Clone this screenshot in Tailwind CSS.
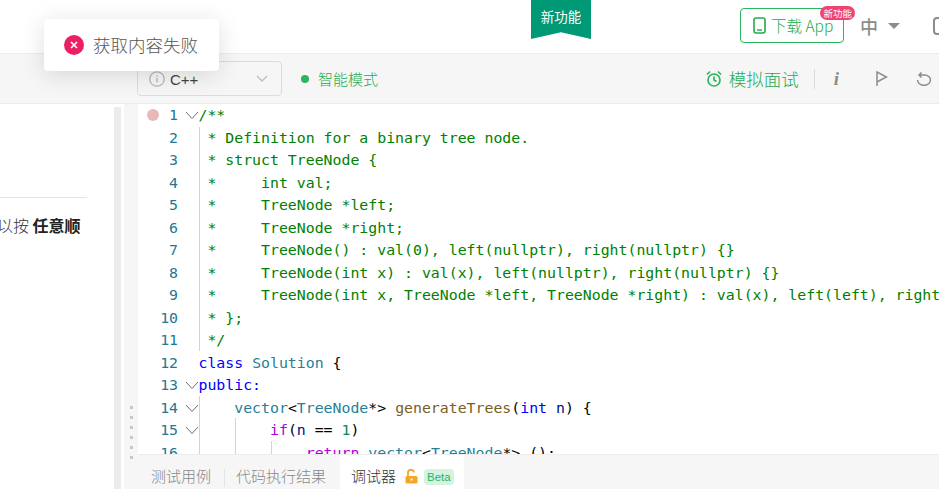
<!DOCTYPE html>
<html lang="zh">
<head>
    <meta charset="utf-8" />
    <title>LeetCode</title>
    <script src="https://cdn.jsdelivr.net/npm/@tailwindcss/browser@4"></script>
</head>
<body class="relative h-[489px] w-[939px] overflow-hidden bg-white font-['Noto_Sans_CJK_SC','Noto_Sans',sans-serif]">
    <!-- toast -->
    <div class="absolute left-[44px] top-[19px] z-20 flex h-[52px] w-[175px] items-center gap-[9px] rounded bg-white pl-[20px] shadow-[0_4px_24px_rgba(0,0,0,0.13)]">
        <svg class="h-[20px] w-[20px]" viewBox="0 0 20 20"><circle cx="10" cy="10" r="10" fill="#ec1f64"/><path d="M7 7l6 6M13 7l-6 6" stroke="#fff" stroke-width="1.6"/></svg>
        <span class="text-[17.5px] leading-none font-light text-[#555]">获取内容失败</span>
    </div>

    <!-- header -->
    <header class="relative flex h-[54px] items-center overflow-hidden border-b border-[#ececec] bg-white pl-[740px]">
        <div class="absolute left-[531px] top-0 flex h-[39px] w-[60px] justify-center bg-[#009975] pt-[6px] text-[13.500px] leading-[20px] text-white [clip-path:polygon(0_0,100%_0,100%_100%,50%_83%,0_100%)]">新功能</div>
        <div class="relative mb-[2px] flex h-[35px] w-[104px] shrink-0 items-center rounded border border-[#2cb55d] pl-[12px] text-[#22ac50]">
            <svg class="mr-[5px] h-[17px] w-[13px]" viewBox="0 0 13 17" fill="none"><rect x="1" y="1" width="11" height="15" rx="2" stroke="currentColor" stroke-width="1.6"/><path d="M4 13h5" stroke="currentColor" stroke-width="1.4"/></svg>
            <span class="whitespace-nowrap text-[15.500px] leading-none font-light">下载 App</span>
            <span class="absolute right-[-12px] top-[-3px] whitespace-nowrap rounded-full bg-[#ef4473] px-[3px] text-[9.500px] leading-[14px] text-white">新功能</span>
        </div>
        <span class="ml-[16px] mb-[1px] shrink-0 text-[18px] leading-none font-medium text-[#8c8c8c]">中</span>
        <span class="ml-[10px] mb-[1px] h-0 w-0 shrink-0 border-x-[6px] border-t-[6px] border-x-transparent border-t-[#8c8c8c]"></span>
        <span class="ml-[33px] mb-[2px] h-[18px] w-[20px] shrink-0 rounded-[4px] border-2 border-[#8c8c8c]"></span>
    </header>

    <!-- toolbar -->
    <div class="flex h-[50px] items-center border-b border-[#ececec] bg-[#f6f6f6] pl-[137px]">
        <div class="flex h-[35px] w-[145px] shrink-0 items-center rounded border border-[#dcdcdc] pl-[11px] text-[#444]">
            <svg class="mr-[5px] h-[16px] w-[16px]" viewBox="0 0 16 16" fill="none"><circle cx="8" cy="8" r="7.2" stroke="#b5b5b5" stroke-width="1.3"/><path d="M8 7v4.5M8 4.5v1.2" stroke="#b5b5b5" stroke-width="1.3"/></svg>
            <span class="mt-[2px] font-['Liberation_Sans',sans-serif] text-[15px] leading-none">C++</span>
            <svg class="ml-[58px] h-[7px] w-[12px]" viewBox="0 0 12 7" fill="none"><path d="M1 1l5 5 5-5" stroke="#bdbdbd" stroke-width="1.3"/></svg>
        </div>
        <span class="ml-[19px] h-[8px] w-[8px] rounded-full bg-[#2db55d]"></span>
        <span class="ml-[9px] text-[15px] leading-none font-light text-[#22ac50]">智能模式</span>
        <div class="ml-auto flex items-center pr-[7px]">
            <svg class="mr-[7px] h-[17px] w-[16px]" viewBox="0 0 16 17" fill="none" stroke="#2db55d" stroke-width="1.7"><circle cx="8" cy="10" r="6"/><path d="M8 6.500V10l2.500 1.500M1 4.500L4 1.500M15 4.500L12 1.500"/></svg>
            <span class="text-[17.500px] leading-none font-light text-[#22ac50]">模拟面试</span>
            <span class="ml-[15px] h-[20px] w-px bg-[#dcdcdc]"></span>
            <span class="ml-[19px] font-['Liberation_Serif',serif] text-[19px] leading-none font-bold italic text-[#8c8c8c]">i</span>
            <svg class="ml-[37px] h-[15px] w-[12px]" viewBox="0 0 12 15" fill="none" stroke="#8c8c8c" stroke-width="1.5"><path d="M1 15V1l9.500 5L1 11"/></svg>
            <svg class="ml-[28px] h-[14px] w-[16px] shrink-0" viewBox="0 0 16 14" fill="none" stroke="#8c8c8c" stroke-width="1.500"><path d="M1.500 8a6.500 5.300 0 0 0 13 0a6 5 0 0 0-6-5H4M5.500.500L3 3l2.500 2.500"/></svg>
        </div>
    </div>

    <!-- body -->
    <div class="flex h-[385px]">
        <!-- description pane -->
        <div class="w-[114px] shrink-0 overflow-hidden bg-white pt-[93px]">
            <div class="w-[87px] border-t border-[#e4e4e4]"></div>
            <p class="mt-[17px] -ml-[3px] whitespace-nowrap text-[16px] leading-[20px] font-light text-[#333]">以按 <b class="font-bold text-[#222]">任意顺</b></p>
        </div>
        <div class="mt-[3px] w-[7px] shrink-0 bg-[#ebebeb]"></div>
        <!-- drag handle -->
        <div class="w-[3px] shrink-0 bg-white"></div>
        <div class="flex w-[14px] shrink-0 flex-col justify-end gap-[7px] bg-[#f6f6f6] pb-[30px] pl-[6px]">
            <span class="h-[3px] w-[3px] bg-[#c8c8c8]"></span>
            <span class="h-[3px] w-[3px] bg-[#c8c8c8]"></span>
            <span class="h-[3px] w-[3px] bg-[#c8c8c8]"></span>
            <span class="h-[3px] w-[3px] bg-[#c8c8c8]"></span>
            <span class="h-[3px] w-[3px] bg-[#c8c8c8]"></span>
            <span class="h-[3px] w-[3px] bg-[#c8c8c8]"></span>
        </div>
        <!-- editor pane -->
        <div class="flex min-w-0 flex-1 flex-col">
            <div class="relative min-h-0 flex-1 overflow-hidden bg-white font-['DejaVu_Sans_Mono',monospace] text-[14.850px] leading-[22.5px] text-black">
                <span class="absolute left-[61px] top-[23px] h-[224px] w-px bg-[#d3d3d3]"></span>
                <span class="absolute left-[61px] top-[292px] h-[58px] w-px bg-[#d3d3d3]"></span>
                <span class="absolute left-[97px] top-[314px] h-[36px] w-px bg-[#d3d3d3]"></span>
                <span class="absolute left-[133px] top-[337px] h-[13px] w-px bg-[#d3d3d3]"></span>
                <span class="absolute left-[9px] top-[5px] h-[12px] w-[12px] rounded-full bg-[#e8b9b9]"></span>

                <div class="flex whitespace-pre"><span class="w-[40px] shrink-0 text-right text-[#237893]">1</span><svg class="ml-[6.500px] mt-[7px] h-[9px] w-[14px] shrink-0" viewBox="0 0 14 9" fill="none"><path d="M1 1l6 6.500L13 1" stroke="#6e6e6e"/></svg><span class="text-[#008000]">/**</span></div>
                <div class="flex whitespace-pre"><span class="w-[40px] shrink-0 text-right text-[#237893]">2</span><span class="ml-[20.500px] text-[#008000]"> * Definition for a binary tree node.</span></div>
                <div class="flex whitespace-pre"><span class="w-[40px] shrink-0 text-right text-[#237893]">3</span><span class="ml-[20.500px] text-[#008000]"> * struct TreeNode {</span></div>
                <div class="flex whitespace-pre"><span class="w-[40px] shrink-0 text-right text-[#237893]">4</span><span class="ml-[20.500px] text-[#008000]"> *     int val;</span></div>
                <div class="flex whitespace-pre"><span class="w-[40px] shrink-0 text-right text-[#237893]">5</span><span class="ml-[20.500px] text-[#008000]"> *     TreeNode *left;</span></div>
                <div class="flex whitespace-pre"><span class="w-[40px] shrink-0 text-right text-[#237893]">6</span><span class="ml-[20.500px] text-[#008000]"> *     TreeNode *right;</span></div>
                <div class="flex whitespace-pre"><span class="w-[40px] shrink-0 text-right text-[#237893]">7</span><span class="ml-[20.500px] text-[#008000]"> *     TreeNode() : val(0), left(nullptr), right(nullptr) {}</span></div>
                <div class="flex whitespace-pre"><span class="w-[40px] shrink-0 text-right text-[#237893]">8</span><span class="ml-[20.500px] text-[#008000]"> *     TreeNode(int x) : val(x), left(nullptr), right(nullptr) {}</span></div>
                <div class="flex whitespace-pre"><span class="w-[40px] shrink-0 text-right text-[#237893]">9</span><span class="ml-[20.500px] text-[#008000]"> *     TreeNode(int x, TreeNode *left, TreeNode *right) : val(x), left(left), right(right) {}</span></div>
                <div class="flex whitespace-pre"><span class="w-[40px] shrink-0 text-right text-[#237893]">10</span><span class="ml-[20.500px] text-[#008000]"> * };</span></div>
                <div class="flex whitespace-pre"><span class="w-[40px] shrink-0 text-right text-[#237893]">11</span><span class="ml-[20.500px] text-[#008000]"> */</span></div>
                <div class="flex whitespace-pre"><span class="w-[40px] shrink-0 text-right text-[#237893]">12</span><span class="ml-[20.500px]"><span class="text-[#0000ff]">class</span> <span class="text-[#267f99]">Solution</span> {</span></div>
                <div class="flex whitespace-pre"><span class="w-[40px] shrink-0 text-right text-[#237893]">13</span><svg class="ml-[6.500px] mt-[7px] h-[9px] w-[14px] shrink-0" viewBox="0 0 14 9" fill="none"><path d="M1 1l6 6.500L13 1" stroke="#6e6e6e"/></svg><span class="text-[#0000ff]">public:</span></div>
                <div class="flex whitespace-pre"><span class="w-[40px] shrink-0 text-right text-[#237893]">14</span><svg class="ml-[6.500px] mt-[7px] h-[9px] w-[14px] shrink-0" viewBox="0 0 14 9" fill="none"><path d="M1 1l6 6.500L13 1" stroke="#6e6e6e"/></svg><span>    <span class="text-[#267f99]">vector</span>&lt;<span class="text-[#267f99]">TreeNode</span>*&gt; <span class="text-[#795e26]">generateTrees</span>(<span class="text-[#0000ff]">int</span> <span class="text-[#001080]">n</span>) {</span></div>
                <div class="flex whitespace-pre"><span class="w-[40px] shrink-0 text-right text-[#237893]">15</span><svg class="ml-[6.500px] mt-[7px] h-[9px] w-[14px] shrink-0" viewBox="0 0 14 9" fill="none"><path d="M1 1l6 6.500L13 1" stroke="#6e6e6e"/></svg><span>        <span class="text-[#af00db]">if</span>(<span class="text-[#001080]">n</span> == <span class="text-[#098658]">1</span>)</span></div>
                <div class="flex whitespace-pre"><span class="w-[40px] shrink-0 text-right text-[#237893]">16</span><span class="ml-[20.500px]">            <span class="text-[#af00db]">return</span> <span class="text-[#267f99]">vector</span>&lt;<span class="text-[#267f99]">TreeNode</span>*&gt; ();</span></div>
            </div>
            <!-- console tabs -->
            <div class="flex h-[35px] shrink-0 border-t border-[#ececec] bg-[#f6f6f6] text-[15px] font-light text-[#888]">
                <span class="flex items-center whitespace-nowrap pl-[13px] pr-[13px] pt-[9px]">测试用例</span>
                <span class="mt-[14px] h-[18px] w-px bg-[#e4e4e4]"></span>
                <span class="flex items-center whitespace-nowrap pl-[11px] pr-[14px] pt-[9px]">代码执行结果</span>
                <div class="flex items-center bg-white pl-[11px] pr-[10px] pt-[9px] text-[#333]">
                    <span class="whitespace-nowrap">调试器</span>
                    <svg class="ml-[9px] h-[15px] w-[13px]" viewBox="0 0 13 15" fill="none"><path d="M3 7V4a3 3 0 0 1 6-.5" stroke="#f5a623" stroke-width="1.800"/><rect x="0.500" y="7" width="12" height="7.500" rx="1.500" fill="#f5a623"/><rect x="5.500" y="9.500" width="2" height="2" fill="#fff"/></svg>
                    <span class="ml-[6px] rounded-[4px] bg-[#d6f2e0] px-[3px] font-['Liberation_Sans',sans-serif] text-[11.500px] leading-[16px] text-[#2db55d]">Beta</span>
                </div>
            </div>
        </div>
    </div>
</body>
</html>
